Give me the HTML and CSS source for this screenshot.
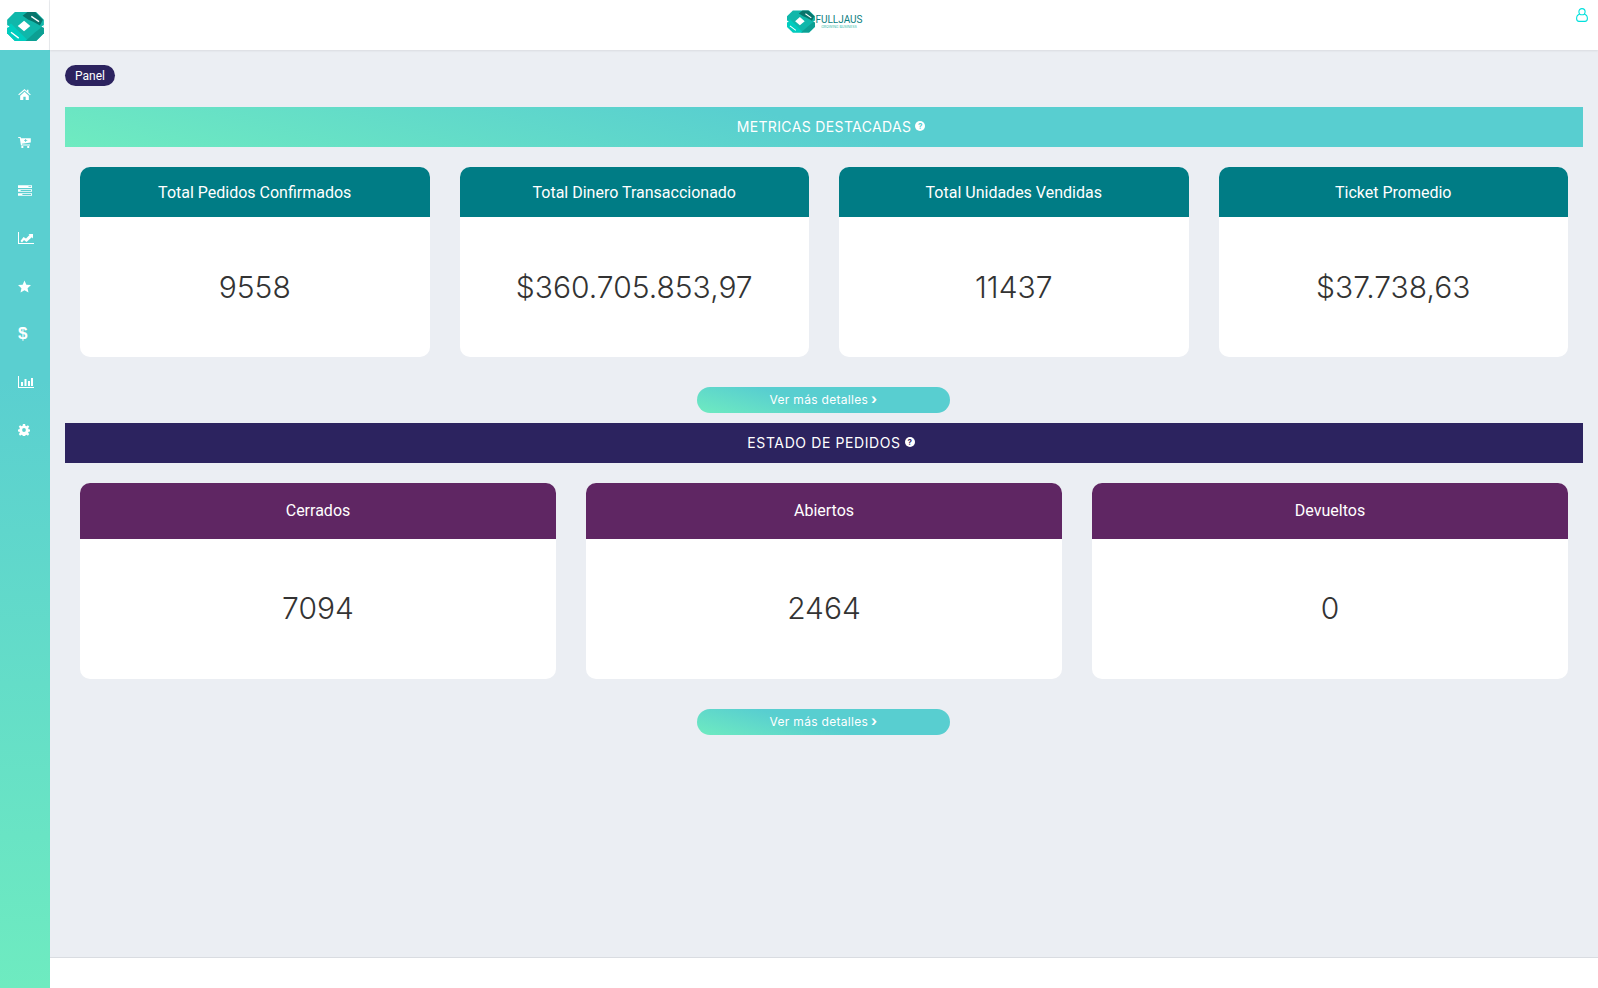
FILE: index.html
```html
<!DOCTYPE html>
<html lang="es">
<head>
    <meta charset="UTF-8">
    <meta name="viewport" content="width=device-width, initial-scale=1.0">
    <title>Fulljaus - Panel</title>
    <link rel="stylesheet" href="styles.css">
</head>
<body>
    <svg class="svg-defs" width="0" height="0">
        <symbol id="logo-mark" viewBox="0 0 38 30">
            <path fill="#10b7aa" d="M8 0H30L38 8V22L30 30H8L0 22V8Z"/>
            <path fill="#00cdbf" d="M0 15 4 12 22 30H8L0 22Z"/>
            <path fill="#08756c" d="M16 4 21 0H29L37 8 34 14 27 10 22 8Z"/>
            <path fill="#0d9f93" d="M38 14V22L30 30H19L29 21Z"/>
            <path fill="#fff" d="M17.500 9 24 14.500 17.500 20 11 14.500Z"/>
            <path fill="#fff" d="M0 13.500 2.500 15 0 16.500ZM38 13.500 35.500 15 38 16.500Z"/>
            <path fill="none" stroke="#fff" stroke-width="1.400" d="M25 4.500 33 10M4 21 12 27"/>
        </symbol>
    </svg>

    <aside class="sidebar">
        <div class="sidebar-logo">
            <svg class="logo-big"><use href="#logo-mark"/></svg>
        </div>
        <nav class="sidebar-nav">
            <a class="nav-item"><svg class="icon-home" viewBox="0 0 16 14"><path d="M8 0 0 7l1 1 7-6 7 6 1-1-3-2.600V1h-2v2zM2.500 8.500V14H6.500V10h3v4h4V8.500L8 3.500z"/></svg></a>
            <a class="nav-item"><svg class="icon-cart" viewBox="0 0 16 14"><path fill-rule="evenodd" d="M0 0h3l.5 1.500H16V7L4.500 8.500l.3 1H15v1.200H3.500L2 1.200H0zM9 2.500v1.500H7.500v1H9V6.500h1V5h1.500V4H10V2.500zM4 11.500h2.500V14H4zM11.500 11.500H14V14h-2.500z"/></svg></a>
            <a class="nav-item"><svg class="icon-server" viewBox="0 0 16 12"><path fill-rule="evenodd" d="M0 0h16v3H0zM12 1v1h3V1zM0 4.500h16v3H0zM3 5.500v1h12v-1zM0 9h16v3H0zM5 10v1h10v-1z"/></svg></a>
            <a class="nav-item"><svg class="icon-chart" viewBox="0 0 16 12"><path d="M0 0h1v11h15v1H0zM2.500 9l3-4 2.500 1.500L11.500 3l-1-1H15v4.500l-1.200-1.200L8.500 10 6 8l-2 2.500z"/></svg></a>
            <a class="nav-item"><svg class="icon-star" viewBox="0 0 14 13"><path d="M7 0l2 4.500 5 .5-3.700 3.300L11.300 13 7 10.600 2.700 13l1-4.700L0 5l5-.5z"/></svg></a>
            <a class="nav-item"><span class="dollar">$</span></a>
            <a class="nav-item"><svg class="icon-chart" viewBox="0 0 16 12"><path d="M0 0h1v11h15v1H0zM3 6h2v4H3zM6.500 3h2v7h-2zM10 5h2v5h-2zM13 2h2v8h-2z"/></svg></a>
            <a class="nav-item"><svg class="icon-cog" viewBox="0 0 14 14"><path fill-rule="evenodd" d="M5.700 0h2.600l.3 2 1.300.6L11.600 1.400l1.500 1.800-1.300 1.500.5 1.300 1.700.3v2.400l-1.700.3-.5 1.300 1.300 1.500-1.500 1.800-1.700-1.200-1.300.6-.3 2H5.700l-.3-2-1.300-.6-1.700 1.200-1.500-1.800L2.200 10.300l-.5-1.300L0 8.700V6.300L1.700 6l.5-1.300L.9 3.200 2.400 1.400l1.700 1.200 1.300-.6zM7 4.800a2.200 2.200 0 1 0 0 4.400 2.200 2.200 0 0 0 0-4.400z"/></svg></a>
        </nav>
    </aside>

    <div class="main">
        <header class="topbar">
            <div class="brand">
                <svg class="logo-small"><use href="#logo-mark"/></svg>
                <div class="brand-text">
                    <span class="brand-name">FULLJAUS</span>
                    <span class="brand-tag">GROWING BUSINESS</span>
                </div>
            </div>
            <a class="user-link">
                <svg viewBox="0 0 12 14" fill="none" stroke="#00e0dc" stroke-width="1.100"><circle cx="6" cy="3.700" r="3.100"/><path d="M3.700 6.300C1.500 6.800.6 8.600.6 10.600.6 12.300 1.500 13.400 3 13.400h6c1.500 0 2.400-1.100 2.400-2.800 0-2-.9-3.800-3.100-4.300"/></svg>
            </a>
        </header>

        <main class="content">
            <div class="breadcrumb">Panel</div>

            <section>
                <h2 class="banner banner-green">METRICAS DESTACADAS <span class="help">?</span></h2>
                <div class="cards cards-4">
                    <div class="card">
                        <div class="card-head head-teal">Total Pedidos Confirmados</div>
                        <div class="card-value">9558</div>
                    </div>
                    <div class="card">
                        <div class="card-head head-teal">Total Dinero Transaccionado</div>
                        <div class="card-value">$360.705.853,97</div>
                    </div>
                    <div class="card">
                        <div class="card-head head-teal">Total Unidades Vendidas</div>
                        <div class="card-value">11437</div>
                    </div>
                    <div class="card">
                        <div class="card-head head-teal">Ticket Promedio</div>
                        <div class="card-value">$37.738,63</div>
                    </div>
                </div>
                <div class="more-row"><a class="more-btn">Ver más detalles <span class="chev">›</span></a></div>
            </section>

            <section class="section-orders">
                <h2 class="banner banner-navy">ESTADO DE PEDIDOS <span class="help">?</span></h2>
                <div class="cards cards-3">
                    <div class="card">
                        <div class="card-head head-purple">Cerrados</div>
                        <div class="card-value">7094</div>
                    </div>
                    <div class="card">
                        <div class="card-head head-purple">Abiertos</div>
                        <div class="card-value">2464</div>
                    </div>
                    <div class="card">
                        <div class="card-head head-purple">Devueltos</div>
                        <div class="card-value">0</div>
                    </div>
                </div>
                <div class="more-row"><a class="more-btn">Ver más detalles <span class="chev">›</span></a></div>
            </section>
        </main>

        <footer class="footer"></footer>
    </div>
</body>
</html>
```
FILE: styles.css
```css
* {
    box-sizing: border-box;
}
html, body {
    height: 100%;
}
body {
    margin: 0;
    display: flex;
    height: 100vh;
    overflow: hidden;
    background-color: #ebeef3;
    font-family: Inter, "Open Sans", sans-serif;
    color: #333;
}
.svg-defs {
    position: absolute;
}

/* sidebar */
.sidebar {
    width: 50px;
    flex-shrink: 0;
    display: flex;
    flex-direction: column;
}
.sidebar-logo {
    height: 50px;
    background: white;
    border-right: 1px solid #eceef1;
    padding: 12px 0 0 7px;
}
.logo-big {
    display: block;
    width: 37px;
    height: 29px;
}
.sidebar-nav {
    flex: 1;
    padding-top: 20px;
    background: linear-gradient(to bottom, #5acfd0 0%, #5acfd0 35%, #6eebc0 100%);
}
.nav-item {
    height: 48px;
    padding-left: 18px;
    display: flex;
    align-items: center;
}
.nav-item svg {
    fill: white;
}
.icon-home {
    width: 13px;
    height: 11px;
}
.icon-cart {
    width: 13px;
    height: 11px;
}
.icon-server {
    width: 14px;
    height: 11px;
}
.icon-chart {
    width: 16px;
    height: 12px;
}
.icon-star {
    width: 13px;
    height: 13px;
}
.icon-cog {
    width: 12px;
    height: 12px;
}
.dollar {
    font-family: "Liberation Sans", sans-serif;
    font-weight: bold;
    font-size: 17px;
    color: white;
}

/* top bar */
.main {
    flex: 1;
    min-width: 0;
    display: flex;
    flex-direction: column;
}
.topbar {
    height: 50px;
    flex-shrink: 0;
    background: white;
    box-shadow: 0 1px 2px rgba(0, 0, 0, 0.08);
    display: flex;
    justify-content: center;
    align-items: center;
    position: relative;
    padding-bottom: 7px;
}
.brand {
    display: flex;
    align-items: center;
    padding-left: 2px;
}
.logo-small {
    width: 28px;
    height: 23px;
}
.brand-text {
    display: flex;
    flex-direction: column;
    align-items: center;
}
.brand-name {
    font-family: Roboto, sans-serif;
    font-size: 10px;
    line-height: 11px;
    color: #0b7d80;
}
.brand-tag {
    font-size: 3.500px;
    line-height: 5px;
    color: #2fb8a8;
}
.user-link {
    position: absolute;
    top: 8px;
    right: 10px;
    width: 12px;
    height: 14px;
}
.user-link svg {
    display: block;
    width: 12px;
    height: 14px;
}

/* content */
.content {
    flex: 1;
    padding: 15px 15px 0;
}
.breadcrumb {
    display: inline-block;
    height: 21px;
    line-height: 22px;
    padding: 0 10px;
    border-radius: 11px;
    background-color: #2c235f;
    color: white;
    font-family: Roboto, sans-serif;
    font-size: 12px;
    vertical-align: top;
}
.banner {
    margin: 21px 0 20px;
    height: 40px;
    padding: 0 0 2px 14px;
    display: flex;
    align-items: center;
    justify-content: center;
    gap: 4px;
    font-size: 14px;
    font-weight: 400;
    letter-spacing: 0.36px;
    color: white;
}
.banner-green {
    background: linear-gradient(15deg, #6febc0 0%, #58ced0 50%);
}
.banner-navy {
    margin-top: 0;
    background-color: #2c235f;
    letter-spacing: 0.6px;
}
.help {
    width: 10px;
    height: 10px;
    border-radius: 50%;
    background: white;
    font-size: 8px;
    font-weight: 700;
    line-height: 10px;
    letter-spacing: 0;
    text-align: center;
}
.banner-green .help {
    color: #58ced0;
}
.banner-navy .help {
    color: #2c235f;
}
.cards {
    display: grid;
    gap: 30px;
    padding: 0 15px;
}
.cards-4 {
    grid-template-columns: repeat(4, 1fr);
}
.cards-3 {
    grid-template-columns: repeat(3, 1fr);
}
.card {
    background: white;
    border-radius: 10px;
    overflow: hidden;
    display: flex;
    flex-direction: column;
}
.cards-4 .card {
    height: 190px;
}
.cards-3 .card {
    height: 196px;
}
.card-head {
    color: white;
    font-family: Roboto, sans-serif;
    font-size: 16px;
    text-align: center;
    display: flex;
    align-items: center;
    justify-content: center;
}
.head-teal {
    height: 50px;
    background-color: #007c85;
}
.head-purple {
    height: 56px;
    padding-bottom: 2px;
    background-color: #5f2663;
}
.card-value {
    flex: 1;
    display: flex;
    align-items: center;
    justify-content: center;
    font-size: 30px;
    font-weight: 300;
    color: #333;
}
.cards-3 .card-value {
    padding-bottom: 2px;
}
.more-row {
    display: flex;
    justify-content: center;
    margin-top: 30px;
}
.more-btn {
    width: 253px;
    height: 26px;
    padding-bottom: 2px;
    margin-right: 1px;
    border-radius: 13px;
    background: linear-gradient(15deg, #6febc0 0%, #58ced0 45%);
    color: white;
    font-size: 12px;
    letter-spacing: 0.3px;
    display: flex;
    align-items: center;
    justify-content: center;
    gap: 3px;
}
.chev {
    font-weight: 700;
    font-size: 14px;
    line-height: 1;
}
.section-orders {
    margin-top: 10px;
}
.footer {
    height: 31px;
    flex-shrink: 0;
    background: white;
    border-top: 1px solid #d9dce1;
}
```
